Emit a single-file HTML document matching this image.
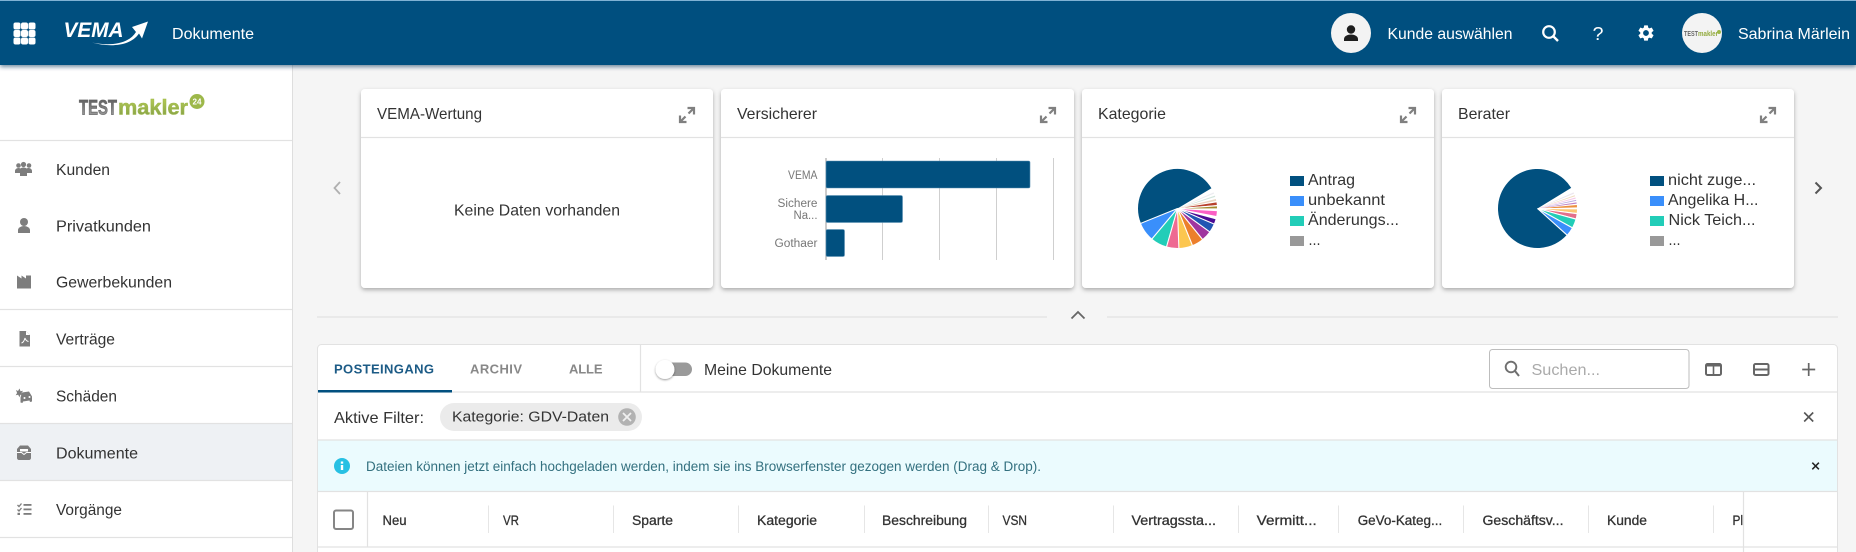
<!DOCTYPE html>
<html lang="de"><head><meta charset="utf-8"><title>Dokumente</title>
<style>
html,body{margin:0;padding:0;width:1856px;height:552px;overflow:hidden;background:#f5f5f5}
svg{display:block}
text{font-family:"Liberation Sans",sans-serif;fill:#333;font-size:16px}
.nav{font-size:15.5px}
.w{fill:#fff}
.th{font-size:13.5px;fill:#333;stroke:#333;stroke-width:.3}
.ax{font-size:11.5px;fill:#777}
.sep{stroke:#e6e6e6;stroke-width:1}
.ln{stroke:#e2e2e2;stroke-width:1.2}
.ic{fill:#7d7d7d}
.exp{fill:none;stroke:#808080;stroke-width:2.2}
</style></head><body>
<svg xmlns="http://www.w3.org/2000/svg" width="1856" height="552" viewBox="0 0 1856 552">
<defs>
<filter id="sh" x="-5%" y="-5%" width="110%" height="115%"><feDropShadow dx="0" dy="2" stdDeviation="2" flood-color="#000" flood-opacity=".3"/></filter>
<filter id="hs" x="0" y="-5%" width="100%" height="130%"><feDropShadow dx="0" dy="2" stdDeviation="2.2" flood-color="#003355" flood-opacity=".55"/></filter>
<filter id="th" x="-40%" y="-40%" width="180%" height="180%"><feDropShadow dx="0" dy="1" stdDeviation="1" flood-color="#000" flood-opacity=".4"/></filter>
<linearGradient id="g1" x1="0" y1="0" x2="0" y2="1"><stop offset="0" stop-color="#555"/><stop offset="1" stop-color="#aaa"/></linearGradient>
<linearGradient id="g2" x1="0" y1="0" x2="0" y2="1"><stop offset="0" stop-color="#b9cf55"/><stop offset="1" stop-color="#7e9a46"/></linearGradient>
<g id="ex"><path class="exp" d="M8.500 1h6.500v6.500M15 1l-5.500 5.500M7.500 15H1V8.500M1 15l5.500-5.500"/></g>
</defs>

<rect width="1856" height="552" fill="#f5f5f5"/>

<!-- sidebar -->
<rect x="0" y="60" width="292" height="492" fill="#fff"/>
<rect x="292" y="60" width="1" height="492" fill="#dedede"/>
<rect x="0" y="424" width="292" height="57" fill="#eef1f4"/>
<line class="ln" x1="0" x2="292" y1="140.500" y2="140.500"/>
<line class="ln" x1="0" x2="292" y1="309.500" y2="309.500"/>
<line class="ln" x1="0" x2="292" y1="366.500" y2="366.500"/>
<line class="ln" x1="0" x2="292" y1="423.500" y2="423.500"/>
<line class="ln" x1="0" x2="292" y1="480.500" y2="480.500"/>
<line class="ln" x1="0" x2="292" y1="537.500" y2="537.500"/>

<!-- testmakler logo -->
<text x="79" y="114.500" textLength="38" lengthAdjust="spacingAndGlyphs" style="font-size:21px;font-weight:bold;fill:url(#g1);stroke:#666;stroke-width:.7">TEST</text>
<text x="118" y="114.500" textLength="70" lengthAdjust="spacingAndGlyphs" style="font-size:21px;font-weight:bold;fill:url(#g2);stroke:#9db84a;stroke-width:.5">makler</text>
<circle cx="197" cy="101.500" r="7.500" fill="#9db84a"/>
<text x="192.500" y="104.500" textLength="9" lengthAdjust="spacingAndGlyphs" style="font-size:8px;font-weight:bold;fill:#fff">24</text>

<!-- sidebar labels -->
<text class="nav" x="56" y="175" textLength="54" lengthAdjust="spacingAndGlyphs">Kunden</text>
<text class="nav" x="56" y="231.500" textLength="95" lengthAdjust="spacingAndGlyphs">Privatkunden</text>
<text class="nav" x="56" y="287.500" textLength="116" lengthAdjust="spacingAndGlyphs">Gewerbekunden</text>
<text class="nav" x="56" y="344.500" textLength="59" lengthAdjust="spacingAndGlyphs">Verträge</text>
<text class="nav" x="56" y="401.500" textLength="61" lengthAdjust="spacingAndGlyphs">Schäden</text>
<text class="nav" x="56" y="458.500" textLength="82" lengthAdjust="spacingAndGlyphs">Dokumente</text>
<text class="nav" x="56" y="515" textLength="66" lengthAdjust="spacingAndGlyphs">Vorgänge</text>

<!-- sidebar icons -->
<g class="ic">
<circle cx="18.500" cy="165.500" r="2.300"/><circle cx="23.500" cy="164.500" r="2.600"/><circle cx="29" cy="165.500" r="2.300"/>
<path d="M15 173v-2c0-2 2-3 3.500-3s2 .5 2 .5c.8-.8 2-1 3-1s2.200.2 3 1c0 0 .7-.5 2-.5 1.500 0 3.500 1 3.500 3v2h-5v3h-7v-3z"/>
<circle cx="24" cy="222" r="4"/><path d="M18 233v-3c0-2.500 3.500-4 6-4s6 1.500 6 4v3z"/>
<path d="M17 275.500l4.500 3v-3l4.500 3v-3h5v13H17z"/>
<path d="M19.500 331h6.500l4 4v11.500H19.500z"/><path d="M26 331v4h4" fill="#fff"/><path d="M21.500 343c2-.5 3-3 3.500-5 .5 2 1.500 3 3.500 3.500" fill="none" stroke="#fff" stroke-width="1"/>
<path d="M16 390l2 1 1.500-2.500 1 2.800 2.500-.5-1.500 2.200 1.500 2-2.600-.3-1 2.500-1.200-2.500-2.500.5 1.400-2.200z"/>
<path d="M22 392.500l7-1 3 5v5l-2 .5-.5-1.500-6.500 1-.5 1.500-2-.5v-5z"/><circle cx="24.500" cy="398" r="1" fill="#fff"/><circle cx="29.500" cy="397" r="1" fill="#fff"/>
<path d="M17 449l3-3.500h8l3 3.500v9c0 1-.8 2-2 2H19c-1.200 0-2-1-2-2z"/><path d="M20 449h8v2.500h-8z" fill="#fff"/><path d="M17 452.500h4.500l2.500 2 2.500-2H31" fill="none" stroke="#fff" stroke-width="1"/>
<rect x="23.500" y="504" width="8" height="1.800"/><rect x="23.500" y="508.500" width="8" height="1.800"/><rect x="23.500" y="513" width="8" height="1.800"/>
<path d="M17.500 505l1.500 1.500 2.500-3" fill="none" stroke="#7d7d7d" stroke-width="1.300"/><path d="M17.500 509.500l1.500 1.500 2.500-3" fill="none" stroke="#7d7d7d" stroke-width="1.300"/><rect x="17.500" y="512.800" width="2.500" height="2.200"/>
</g>

<!-- header -->
<rect x="0" y="0" width="1856" height="65" fill="#01507f" filter="url(#hs)"/>
<rect x="0" y="0" width="1856" height="1" fill="#7fb2d4"/>
<g fill="#fff">
<rect x="13.500" y="22.500" width="7" height="7" rx="2"/><rect x="21" y="22.500" width="7" height="7" rx="2"/><rect x="28.500" y="22.500" width="7" height="7" rx="2"/>
<rect x="13.500" y="30" width="7" height="7" rx="2"/><rect x="21" y="30" width="7" height="7" rx="2"/><rect x="28.500" y="30" width="7" height="7" rx="2"/>
<rect x="13.500" y="37.500" width="7" height="7" rx="2"/><rect x="21" y="37.500" width="7" height="7" rx="2"/><rect x="28.500" y="37.500" width="7" height="7" rx="2"/>
<path d="M92 42.500C108 46 128 45 136 32l-4-5 16-5.500-6 17-3-5C130 47 108 47 92 42.500z"/>
</g>
<text class="w" x="63.500" y="37" textLength="60" lengthAdjust="spacingAndGlyphs" style="font-size:21px;font-style:italic;font-weight:bold">VEMA</text>
<text class="w" x="172" y="39" textLength="82" lengthAdjust="spacingAndGlyphs">Dokumente</text>

<circle cx="1351" cy="33" r="20" fill="#f3f3f3"/>
<circle cx="1351" cy="29.500" r="4.200" fill="#1e1e1e"/>
<path d="M1344 41v-2c0-3 4-4.500 7-4.500s7 1.500 7 4.500v2z" fill="#1e1e1e"/>
<text class="w" x="1387.500" y="39" textLength="125" lengthAdjust="spacingAndGlyphs">Kunde auswählen</text>
<circle cx="1549" cy="32" r="5.800" fill="none" stroke="#fff" stroke-width="2.200"/>
<line x1="1553.500" y1="36.500" x2="1558" y2="41" stroke="#fff" stroke-width="2.400"/>
<text class="w" x="1592.500" y="40" textLength="11" lengthAdjust="spacingAndGlyphs" style="font-size:18px">?</text>
<path transform="translate(1646 33) scale(.8) translate(-12 -12)" fill="#fff" d="M19.140 12.940c.04-.3.06-.61.06-.94 0-.32-.02-.64-.07-.94l2.030-1.580c.18-.14.23-.41.12-.61l-1.920-3.320c-.12-.22-.37-.29-.59-.22l-2.390.96c-.5-.38-1.030-.7-1.620-.94l-.36-2.540c-.04-.24-.24-.41-.48-.41h-3.840c-.24 0-.43.17-.47.41l-.36 2.540c-.59.24-1.130.57-1.620.94l-2.390-.96c-.22-.08-.47 0-.59.22L2.740 8.870c-.12.21-.08.47.12.61l2.030 1.580c-.05.3-.09.63-.09.94s.02.64.07.94l-2.030 1.580c-.18.14-.23.41-.12.61l1.920 3.320c.12.22.37.29.59.22l2.390-.96c.5.38 1.030.7 1.620.94l.36 2.540c.05.24.24.41.48.41h3.840c.24 0 .44-.17.47-.41l.36-2.540c.59-.24 1.130-.56 1.620-.94l2.390.96c.22.08.47 0 .59-.22l1.920-3.320c.12-.22.07-.47-.12-.61l-2.010-1.580zM12 15.600c-1.980 0-3.600-1.620-3.600-3.600s1.620-3.600 3.600-3.600 3.600 1.620 3.600 3.600-1.620 3.600-3.600 3.600z"/>
<circle cx="1702" cy="33" r="20" fill="#f3f3f3"/>
<text x="1684" y="36" textLength="14" lengthAdjust="spacingAndGlyphs" style="font-size:7px;font-weight:bold;fill:#666">TEST</text>
<text x="1698" y="36" textLength="20" lengthAdjust="spacingAndGlyphs" style="font-size:7px;font-weight:bold;fill:#93ab3e">makler</text>
<circle cx="1719" cy="32" r="2" fill="#9db84a"/>
<text class="w" x="1738" y="39" textLength="112" lengthAdjust="spacingAndGlyphs">Sabrina Märlein</text>

<!-- carousel chevrons -->
<path d="M340 182l-5.500 6 5.500 6" fill="none" stroke="#b0b0b0" stroke-width="1.800"/>
<path d="M1815.500 182.500l5.500 5.500-5.500 5.500" fill="none" stroke="#555" stroke-width="2"/>

<!-- cards -->
<g fill="#fff" filter="url(#sh)">
<rect x="361" y="89" width="352" height="199" rx="4"/>
<rect x="721" y="89" width="353" height="199" rx="4"/>
<rect x="1082" y="89" width="352" height="199" rx="4"/>
<rect x="1442" y="89" width="352" height="199" rx="4"/>
</g>
<line class="ln" x1="361" x2="713" y1="137.500" y2="137.500"/>
<line class="ln" x1="721" x2="1074" y1="137.500" y2="137.500"/>
<line class="ln" x1="1082" x2="1434" y1="137.500" y2="137.500"/>
<line class="ln" x1="1442" x2="1794" y1="137.500" y2="137.500"/>
<text x="377" y="119" textLength="105" lengthAdjust="spacingAndGlyphs">VEMA-Wertung</text>
<text x="737" y="119" textLength="80" lengthAdjust="spacingAndGlyphs">Versicherer</text>
<text x="1098" y="119" textLength="68" lengthAdjust="spacingAndGlyphs">Kategorie</text>
<text x="1458" y="119" textLength="52" lengthAdjust="spacingAndGlyphs">Berater</text>
<use href="#ex" x="679" y="107"/><use href="#ex" x="1040" y="107"/><use href="#ex" x="1400" y="107"/><use href="#ex" x="1760" y="107"/>

<text x="454" y="215.500" textLength="166" lengthAdjust="spacingAndGlyphs">Keine Daten vorhanden</text>

<!-- bar chart -->
<g stroke="#cfcfcf" stroke-width="1">
<line x1="882.500" x2="882.500" y1="158" y2="260"/><line x1="939.500" x2="939.500" y1="158" y2="260"/><line x1="996.500" x2="996.500" y1="158" y2="260"/><line x1="1053.500" x2="1053.500" y1="158" y2="260"/>
</g>
<line x1="826" x2="826" y1="158" y2="260" stroke="#999"/>
<g fill="#01507f" stroke="#5b90b3" stroke-width=".6">
<rect x="826" y="161" width="204" height="27" rx="1.500"/>
<rect x="826" y="195.500" width="76.500" height="27" rx="1.500"/>
<rect x="826" y="229.500" width="18.500" height="27" rx="1.500"/>
</g>
<text class="ax" x="788" y="179" textLength="29.500" lengthAdjust="spacingAndGlyphs">VEMA</text>
<text class="ax" x="777.500" y="207" textLength="40" lengthAdjust="spacingAndGlyphs">Sichere</text>
<text class="ax" x="793.500" y="219" textLength="24" lengthAdjust="spacingAndGlyphs">Na...</text>
<text class="ax" x="774.500" y="247" textLength="43" lengthAdjust="spacingAndGlyphs">Gothaer</text>

<!-- pie 1 -->
<g transform="translate(1177.500 208.500)" fill="none" stroke-width="39.500">
<circle r="19.750" pathLength="360" stroke="#01507f" stroke-dasharray="172 360" transform="rotate(158)"/>
<circle r="19.750" pathLength="360" stroke="#3a8ffb" stroke-dasharray="28 360" transform="rotate(130)"/>
<circle r="19.750" pathLength="360" stroke="#22cdb8" stroke-dasharray="24 360" transform="rotate(106)"/>
<circle r="19.750" pathLength="360" stroke="#ee6a92" stroke-dasharray="18 360" transform="rotate(88)"/>
<circle r="19.750" pathLength="360" stroke="#fcc64f" stroke-dasharray="20 360" transform="rotate(68)"/>
<circle r="19.750" pathLength="360" stroke="#ec7f2c" stroke-dasharray="17 360" transform="rotate(51)"/>
<circle r="19.750" pathLength="360" stroke="#a0359f" stroke-dasharray="15 360" transform="rotate(36)"/>
<circle r="19.750" pathLength="360" stroke="#2155b3" stroke-dasharray="13 360" transform="rotate(23)"/>
<circle r="19.750" pathLength="360" stroke="#4a0c94" stroke-dasharray="8 360" transform="rotate(15)"/>
<circle r="19.750" pathLength="360" stroke="#fb5fc5" stroke-dasharray="8 360" transform="rotate(3)"/>
<circle r="19.750" pathLength="360" stroke="#a48a2c" stroke-dasharray="4 360" transform="rotate(-4)"/>
<circle r="19.750" pathLength="360" stroke="#b8412c" stroke-dasharray="4 360" transform="rotate(-9)"/>
<circle r="19.750" pathLength="360" stroke="#e9d5c0" stroke-dasharray="3 360" transform="rotate(-14)"/>
<circle r="19.750" pathLength="360" stroke="#d2e5dc" stroke-dasharray="2 360" transform="rotate(-19)"/>
<circle r="19.750" pathLength="360" stroke="#ececf0" stroke-dasharray="2 360" transform="rotate(-24)"/>
<g stroke="#fff" stroke-width="1.100">
<path d="M0 0V-41" transform="rotate(248)"/><path d="M0 0V-41" transform="rotate(220)"/><path d="M0 0V-41" transform="rotate(196)"/><path d="M0 0V-41" transform="rotate(178)"/><path d="M0 0V-41" transform="rotate(158)"/><path d="M0 0V-41" transform="rotate(141)"/><path d="M0 0V-41" transform="rotate(126)"/><path d="M0 0V-41" transform="rotate(113)"/><path d="M0 0V-41" transform="rotate(105)"/><path d="M0 0V-41" transform="rotate(93)"/><path d="M0 0V-41" transform="rotate(86)"/>
</g>
</g>
<!-- pie 2 -->
<g transform="translate(1537.500 208.500)" fill="none" stroke-width="39.500">
<circle r="19.750" pathLength="360" stroke="#01507f" stroke-dasharray="288 360" transform="rotate(42)"/>
<circle r="19.750" pathLength="360" stroke="#3a8ffb" stroke-dasharray="13 360" transform="rotate(29)"/>
<circle r="19.750" pathLength="360" stroke="#22cdb8" stroke-dasharray="13 360" transform="rotate(15.500)"/>
<circle r="19.750" pathLength="360" stroke="#e2708c" stroke-dasharray="7 360" transform="rotate(7.500)"/>
<circle r="19.750" pathLength="360" stroke="#fbc774" stroke-dasharray="6 360" transform="rotate(0.500)"/>
<circle r="19.750" pathLength="360" stroke="#ec9140" stroke-dasharray="3.500 360" transform="rotate(-5)"/>
<circle r="19.750" pathLength="360" stroke="#c081c4" stroke-dasharray="2 360" transform="rotate(-9)"/>
<circle r="19.750" pathLength="360" stroke="#b9a8e0" stroke-dasharray="1.500 360" transform="rotate(-12.500)"/>
<circle r="19.750" pathLength="360" stroke="#f5c8e8" stroke-dasharray="1.500 360" transform="rotate(-16)"/>
<circle r="19.750" pathLength="360" stroke="#f0dcc0" stroke-dasharray="1.500 360" transform="rotate(-19.500)"/>
<circle r="19.750" pathLength="360" stroke="#ece6ee" stroke-dasharray="2 360" transform="rotate(-24)"/>
<g stroke="#fff" stroke-width="1.100">
<path d="M0 0V-41" transform="rotate(132)"/><path d="M0 0V-41" transform="rotate(119)"/><path d="M0 0V-41" transform="rotate(105.500)"/><path d="M0 0V-41" transform="rotate(97.500)"/><path d="M0 0V-41" transform="rotate(90.500)"/>
</g>
</g>

<!-- legends -->
<rect x="1290" y="176" width="14" height="10" fill="#01507f"/><rect x="1290" y="196" width="14" height="10" fill="#3a8ffb"/><rect x="1290" y="216" width="14" height="10" fill="#22cdb8"/><rect x="1290" y="236" width="14" height="10" fill="#999"/>
<text x="1308" y="185" textLength="47" lengthAdjust="spacingAndGlyphs">Antrag</text>
<text x="1308" y="205" textLength="77" lengthAdjust="spacingAndGlyphs">unbekannt</text>
<text x="1308" y="225" textLength="91" lengthAdjust="spacingAndGlyphs">Änderungs...</text>
<text x="1308.500" y="245" textLength="12" lengthAdjust="spacingAndGlyphs">...</text>
<rect x="1650" y="176" width="14" height="10" fill="#01507f"/><rect x="1650" y="196" width="14" height="10" fill="#3a8ffb"/><rect x="1650" y="216" width="14" height="10" fill="#22cdb8"/><rect x="1650" y="236" width="14" height="10" fill="#999"/>
<text x="1668" y="185" textLength="88" lengthAdjust="spacingAndGlyphs">nicht zuge...</text>
<text x="1668" y="205" textLength="90.500" lengthAdjust="spacingAndGlyphs">Angelika H...</text>
<text x="1668.500" y="225" textLength="87" lengthAdjust="spacingAndGlyphs">Nick Teich...</text>
<text x="1668.500" y="245" textLength="12" lengthAdjust="spacingAndGlyphs">...</text>

<!-- divider with collapse chevron -->
<line class="ln" x1="317" x2="1047" y1="317" y2="317"/>
<line class="ln" x1="1107" x2="1838" y1="317" y2="317"/>
<path d="M1071.500 318.500l6.500-6.500 6.500 6.500" fill="none" stroke="#666" stroke-width="1.800"/>

<!-- table card -->
<rect x="317.500" y="344.500" width="1520" height="220" rx="4" fill="#fff" stroke="#e2e2e2"/>
<rect x="318" y="440" width="1519" height="51.500" fill="#ebfbfe"/>
<line class="ln" x1="318" x2="1837" y1="392" y2="392"/>
<line class="ln" x1="318" x2="1837" y1="440" y2="440"/>
<line class="ln" x1="318" x2="1837" y1="491.500" y2="491.500"/>
<line class="ln" x1="318" x2="1837" y1="547" y2="547"/>
<line class="ln" x1="640.500" x2="640.500" y1="345" y2="392"/>
<line class="ln" x1="367.500" x2="367.500" y1="492" y2="547"/>
<line class="ln" x1="1743.500" x2="1743.500" y1="492" y2="552"/>

<!-- tabs -->
<text x="334" y="373.500" textLength="100" lengthAdjust="spacing" style="font-size:13px;font-weight:bold;fill:#1c5b86">POSTEINGANG</text>
<rect x="318" y="390" width="134" height="2.500" fill="#01507f"/>
<text x="470" y="373.500" textLength="52" lengthAdjust="spacing" style="font-size:13px;font-weight:bold;fill:#888">ARCHIV</text>
<text x="569" y="373.500" textLength="33.500" lengthAdjust="spacing" style="font-size:13px;font-weight:bold;fill:#888">ALLE</text>
<rect x="658" y="362.500" width="34" height="13.500" rx="6.750" fill="#9a9a9a"/>
<circle cx="665" cy="369.500" r="9.500" fill="#fff" filter="url(#th)"/>
<text x="704" y="375" textLength="128" lengthAdjust="spacingAndGlyphs">Meine Dokumente</text>

<!-- search -->
<rect x="1489.500" y="349.500" width="199.500" height="39" rx="3" fill="#fff" stroke="#bdbdbd"/>
<circle cx="1511" cy="367" r="5.300" fill="none" stroke="#6f6f6f" stroke-width="1.900"/>
<line x1="1515" y1="371" x2="1519" y2="376" stroke="#6f6f6f" stroke-width="2"/>
<text x="1531.500" y="375" textLength="68.500" lengthAdjust="spacingAndGlyphs" style="fill:#aaa">Suchen...</text>
<rect x="1706" y="364" width="15" height="11" rx="1.500" fill="none" stroke="#666" stroke-width="2"/>
<rect x="1706" y="363.500" width="15" height="3" fill="#666"/><line x1="1713.500" x2="1713.500" y1="364" y2="375" stroke="#666" stroke-width="1.600"/>
<rect x="1754" y="364" width="14.500" height="11" rx="1.500" fill="none" stroke="#666" stroke-width="2"/>
<line x1="1754" x2="1768" y1="369.500" y2="369.500" stroke="#666" stroke-width="2"/>
<path d="M1808.700 363v13M1802.200 369.500h13" stroke="#666" stroke-width="1.700" fill="none"/>

<!-- filter row -->
<text x="334" y="423" textLength="90" lengthAdjust="spacingAndGlyphs">Aktive Filter:</text>
<rect x="440" y="403" width="202" height="28" rx="14" fill="#ebebeb"/>
<text x="452" y="421.500" textLength="157" lengthAdjust="spacingAndGlyphs" style="font-size:14.500px">Kategorie: GDV-Daten</text>
<circle cx="627" cy="417" r="8.800" fill="#b2b2b2"/>
<path d="M623 413l8 8M631 413l-8 8" stroke="#f0f0f0" stroke-width="1.800"/>
<path d="M1804.200 412.500l9 9M1813.200 412.500l-9 9" stroke="#555" stroke-width="1.600"/>

<!-- info -->
<circle cx="342" cy="466" r="8" fill="#27c0e3"/>
<rect x="340.800" y="465" width="2.400" height="5" fill="#fff"/><rect x="340.800" y="461.500" width="2.400" height="2.200" fill="#fff"/>
<text x="366" y="471" textLength="675" lengthAdjust="spacingAndGlyphs" style="font-size:13.500px;fill:#33707f">Dateien können jetzt einfach hochgeladen werden, indem sie ins Browserfenster gezogen werden (Drag &amp; Drop).</text>
<path d="M1812.300 462.700l6.600 6.600M1818.900 462.700l-6.600 6.600" stroke="#222" stroke-width="1.500"/>

<!-- table head -->
<rect x="334" y="510.500" width="19" height="18.500" rx="2" fill="#fff" stroke="#868686" stroke-width="2"/>
<text class="th" x="382.500" y="525" textLength="24" lengthAdjust="spacingAndGlyphs">Neu</text>
<text class="th" x="503" y="525" textLength="16" lengthAdjust="spacingAndGlyphs">VR</text>
<text class="th" x="632" y="525" textLength="41" lengthAdjust="spacingAndGlyphs">Sparte</text>
<text class="th" x="757" y="525" textLength="60" lengthAdjust="spacingAndGlyphs">Kategorie</text>
<text class="th" x="882" y="525" textLength="85" lengthAdjust="spacingAndGlyphs">Beschreibung</text>
<text class="th" x="1002.500" y="525" textLength="24.500" lengthAdjust="spacingAndGlyphs">VSN</text>
<text class="th" x="1131.500" y="525" textLength="84.500" lengthAdjust="spacingAndGlyphs">Vertragssta...</text>
<text class="th" x="1256.700" y="525" textLength="60" lengthAdjust="spacingAndGlyphs">Vermitt...</text>
<text class="th" x="1357.700" y="525" textLength="84.500" lengthAdjust="spacingAndGlyphs">GeVo-Kateg...</text>
<text class="th" x="1482.500" y="525" textLength="81" lengthAdjust="spacingAndGlyphs">Geschäftsv...</text>
<text class="th" x="1607" y="525" textLength="40" lengthAdjust="spacingAndGlyphs">Kunde</text>
<text class="th" x="1732.500" y="525" textLength="10.500" lengthAdjust="spacingAndGlyphs">Pl</text>
<g class="sep">
<line x1="488.500" x2="488.500" y1="505.500" y2="533"/><line x1="613.500" x2="613.500" y1="505.500" y2="533"/><line x1="738.500" x2="738.500" y1="505.500" y2="533"/><line x1="864.500" x2="864.500" y1="505.500" y2="533"/><line x1="988.500" x2="988.500" y1="505.500" y2="533"/><line x1="1113.500" x2="1113.500" y1="505.500" y2="533"/><line x1="1238.500" x2="1238.500" y1="505.500" y2="533"/><line x1="1338.500" x2="1338.500" y1="505.500" y2="533"/><line x1="1463.500" x2="1463.500" y1="505.500" y2="533"/><line x1="1588.500" x2="1588.500" y1="505.500" y2="533"/><line x1="1713.500" x2="1713.500" y1="505.500" y2="533"/>
</g>
</svg>
</body></html>
